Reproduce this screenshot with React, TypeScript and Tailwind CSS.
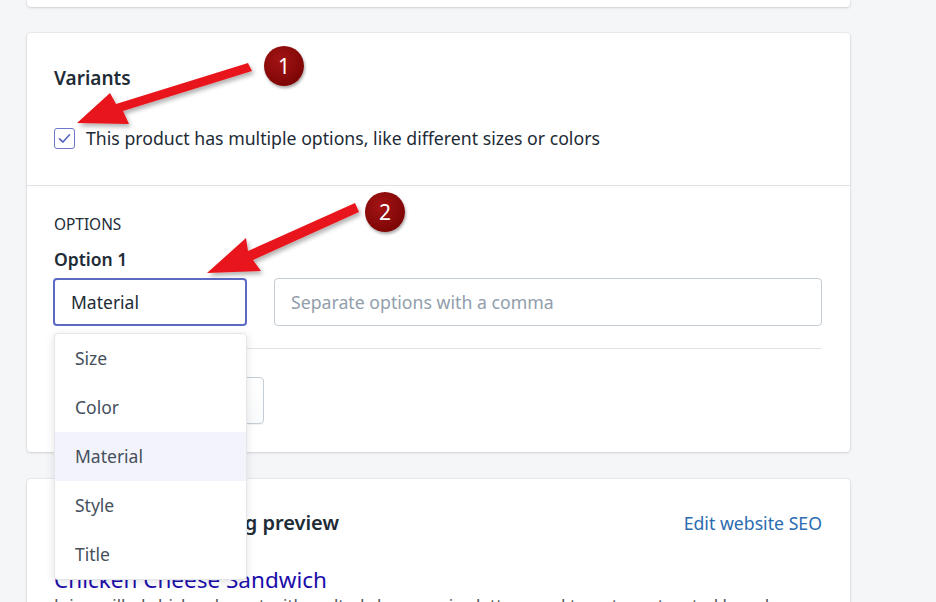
import { useState } from "react";

const optionNames = ["Size", "Color", "Material", "Style", "Title"];

function Badge({ n, className }: { n: string; className: string }) {
  return (
    <div
      className={`absolute flex h-[40px] w-[40px] items-center justify-center rounded-full bg-[radial-gradient(circle_at_40%_35%,#a31414,#700000)] text-[21px] leading-none text-white shadow-[1px_2px_3px_rgba(0,0,0,0.35)] ${className}`}
    >
      {n}
    </div>
  );
}

function Arrows() {
  return (
    <svg
      className="pointer-events-none absolute left-0 top-0"
      width={936}
      height={602}
      viewBox="0 0 936 602"
    >
      <defs>
        <filter id="sh" x="-20%" y="-20%" width="140%" height="140%">
          <feDropShadow dx="2" dy="3" stdDeviation="2" floodColor="#000" floodOpacity="0.3" />
        </filter>
      </defs>
      <g fill="#e8171b" filter="url(#sh)">
        {/* arrow 1 */}
        <polygon points="248,63 252,71 123,111 129,124 77,123 110,93 116,104" />
        {/* arrow 2 */}
        <polygon points="355,203 359,212 253,260 261,271 207,273 246,238 248,251" />
      </g>
    </svg>
  );
}

export default function App() {
  const [picked] = useState("Material");

  return (
    <div className="relative h-[602px] w-[936px] overflow-hidden bg-[#f4f6f8] font-['Noto_Sans',sans-serif] text-[#212b36]">
      <div className="w-[823px] ml-[27px]">
        {/* previous card, only its foot is visible */}
        <div className="h-[7px] rounded-b-[4px] bg-white shadow-[0_0_0_1px_rgba(63,63,68,0.05),0_1px_3px_rgba(63,63,68,0.15)]" />

        {/* variants card */}
        <div className="mt-[26px] rounded-[4px] bg-white shadow-[0_0_0_1px_rgba(63,63,68,0.05),0_1px_3px_rgba(63,63,68,0.15)]">
          <div className="pl-[27px] pr-[28px] pt-[33px] pb-[36px]">
            <h2 className="text-[19px] font-semibold leading-[24px]">Variants</h2>
            <label className="mt-[38px] flex items-center gap-[11px]">
              <span className="flex h-[21px] w-[21px] items-center justify-center rounded-[3px] border-[1.5px] border-[#6d77c9] bg-white">
                <svg width="13" height="11" viewBox="0 0 13 11" fill="none">
                  <path d="M1.5 5.8 L5 9 L11.5 1.8" stroke="#5c6ac4" strokeWidth="1.7" strokeLinecap="round" strokeLinejoin="round" />
                </svg>
              </span>
              <span className="text-[17.7px] leading-[21px] text-[#212b36]">
                This product has multiple options, like different sizes or colors
              </span>
            </label>
          </div>

          <div className="border-t border-[#dfe3e8] pl-[27px] pr-[28px] pt-[29px] pb-[28px]">
            <div className="text-[15.4px] leading-[20px] text-[#212b36]">OPTIONS</div>
            <div className="mt-[12px] text-[17.5px] font-semibold leading-[24px]">Option 1</div>
            <div className="mt-[7px] -ml-px flex gap-[27px]">
              <div className="relative w-[194px] shrink-0">
                <div className="flex h-[48px] items-center rounded-[4px] border-2 border-[#5c6ac4] px-[16px] text-[17.5px] text-[#212b36]">
                  {picked}
                </div>
                <ul className="absolute left-px top-[55px] z-10 w-[193px] rounded-[4px] border border-[#e3e6ea] bg-white shadow-[0_2px_8px_rgba(63,63,68,0.15)]">
                  {optionNames.map((o) => (
                    <li
                      key={o}
                      className={`flex h-[49px] items-center px-[20px] text-[17.5px] text-[#454f5b] ${
                        o === picked ? "bg-[#f3f4fb]" : ""
                      }`}
                    >
                      {o}
                    </li>
                  ))}
                </ul>
              </div>
              <div className="flex h-[48px] flex-1 items-center rounded-[4px] border border-[#c4cdd5] px-[16px] text-[17.7px] text-[#919eab]">
                Separate options with a comma
              </div>
            </div>
            <div className="mt-[22px] h-px bg-[#dfe3e8]" />
            <button className="mt-[28px] flex h-[47px] w-[210px] items-center justify-center rounded-[4px] border border-[#c4cdd5] bg-gradient-to-b from-white to-[#f9fafb] text-[17px] text-[#212b36] shadow-[0_1px_0_rgba(22,29,37,0.05)]">
              Add another option
            </button>
          </div>
        </div>

        {/* search engine listing card */}
        <div className="mt-[27px] rounded-[4px] bg-white pl-[27px] pr-[28px] pt-[32px] pb-[30px] shadow-[0_0_0_1px_rgba(63,63,68,0.05),0_1px_3px_rgba(63,63,68,0.15)]">
          <div className="flex items-center justify-between">
            <h2 className="text-[20px] font-semibold leading-[24px]">Search engine listing preview</h2>
            <a className="text-[17.7px] leading-[24px] text-[#2b6cb0]">Edit website SEO</a>
          </div>
          <div className="mt-[31px] text-[22.5px] leading-[28px] text-[#1a0dab]">Chicken Cheese Sandwich</div>
          <div className="text-[17px] leading-[22px] text-[#545454]">
            Juicy grilled chicken breast with melted cheese, crisp lettuce and tomato on toasted bread.
          </div>
        </div>
      </div>

      <Arrows />
      <Badge n="1" className="left-[264px] top-[46px]" />
      <Badge n="2" className="left-[365px] top-[192px]" />
    </div>
  );
}
